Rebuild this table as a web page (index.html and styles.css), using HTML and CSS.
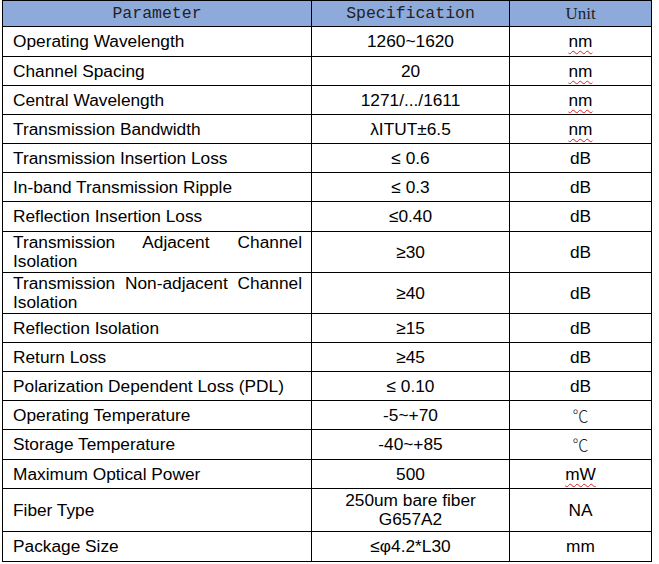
FILE: index.html
```html
<!DOCTYPE html>
<html>
<head>
<meta charset="utf-8">
<link rel="stylesheet" href="styles.css">
</head>
<body>
<div class="wrap">
<table class="spec">
  <colgroup>
    <col class="c1"><col class="c2"><col class="c3">
  </colgroup>
  <thead>
    <tr class="head">
      <th class="mono">Parameter</th>
      <th class="mono">Specification</th>
      <th class="serif">Unit</th>
    </tr>
  </thead>
  <tbody>
    <tr class="r30"><td class="p">Operating Wavelength</td><td>1260~1620</td><td><span class="sp">nm</span></td></tr>
    <tr><td class="p">Channel Spacing</td><td>20</td><td><span class="sp">nm</span></td></tr>
    <tr><td class="p">Central Wavelength</td><td>1271/.../1611</td><td><span class="sp">nm</span></td></tr>
    <tr><td class="p">Transmission Bandwidth</td><td>λITUT±6.5</td><td><span class="sp">nm</span></td></tr>
    <tr><td class="p">Transmission Insertion Loss</td><td>≤ 0.6</td><td>dB</td></tr>
    <tr><td class="p">In-band Transmission Ripple</td><td>≤ 0.3</td><td>dB</td></tr>
    <tr class="r30"><td class="p">Reflection Insertion Loss</td><td>≤0.40</td><td>dB</td></tr>
    <tr class="r41"><td class="p">Transmission Adjacent Channel Isolation</td><td>≥30</td><td>dB</td></tr>
    <tr class="r41"><td class="p">Transmission Non-adjacent Channel Isolation</td><td>≥40</td><td>dB</td></tr>
    <tr><td class="p">Reflection Isolation</td><td>≥15</td><td>dB</td></tr>
    <tr><td class="p">Return Loss</td><td>≥45</td><td>dB</td></tr>
    <tr><td class="p">Polarization Dependent Loss (PDL)</td><td>≤ 0.10</td><td>dB</td></tr>
    <tr><td class="p">Operating Temperature</td><td>-5~+70</td><td class="deg">℃</td></tr>
    <tr class="r30"><td class="p">Storage Temperature</td><td>-40~+85</td><td class="deg">℃</td></tr>
    <tr><td class="p">Maximum Optical Power</td><td>500</td><td><span class="sp">mW</span></td></tr>
    <tr class="r43"><td class="p">Fiber Type</td><td>250um bare fiber<br>G657A2</td><td>NA</td></tr>
    <tr class="r30"><td class="p">Package Size</td><td>≤φ4.2*L30</td><td>mm</td></tr>
  </tbody>
</table>
</div>
</body>
</html>
```
FILE: styles.css
```css
html, body {
  margin: 0;
  padding: 0;
  background: #fff;
}
.wrap {
  padding: 0 0 0 2px;
}
.spec {
  border-collapse: collapse;
  table-layout: fixed;
  width: 649px;
  font-family: "Liberation Sans", Arial, sans-serif;
  font-size: 17.3px;
  color: #000;
}
.c1 { width: 309px; }
.c2 { width: 198px; }
.c3 { width: 142px; }
.spec th,
.spec td {
  border: 1px solid #000;
  padding: 0;
  line-height: 19px;
  text-align: center;
  vertical-align: middle;
}
.head th {
  background: #8eaadb;
  font-weight: normal;
  color: #222;
  height: 25px;
}
.mono {
  font-family: "Liberation Mono", "Courier New", monospace;
  font-size: 16.5px;
}
.serif {
  font-family: "Liberation Serif", "Times New Roman", serif;
  font-size: 17px;
}
.spec tbody tr { height: 29px; }
.spec tbody tr.r30 { height: 30px; }
.spec tbody tr.r41 { height: 41px; }
.spec tbody tr.r43 { height: 43px; }
.spec td.p {
  text-align: justify;
  padding: 0 9px 0 10px;
}
.sp {
  text-decoration: underline wavy #e02020;
  text-decoration-thickness: 1px;
  text-underline-offset: 3px;
}
.deg {
  font-family: "Noto Sans CJK SC", "DejaVu Sans", sans-serif;
  font-weight: 300;
  font-size: 16px;
  color: #222;
}
```
